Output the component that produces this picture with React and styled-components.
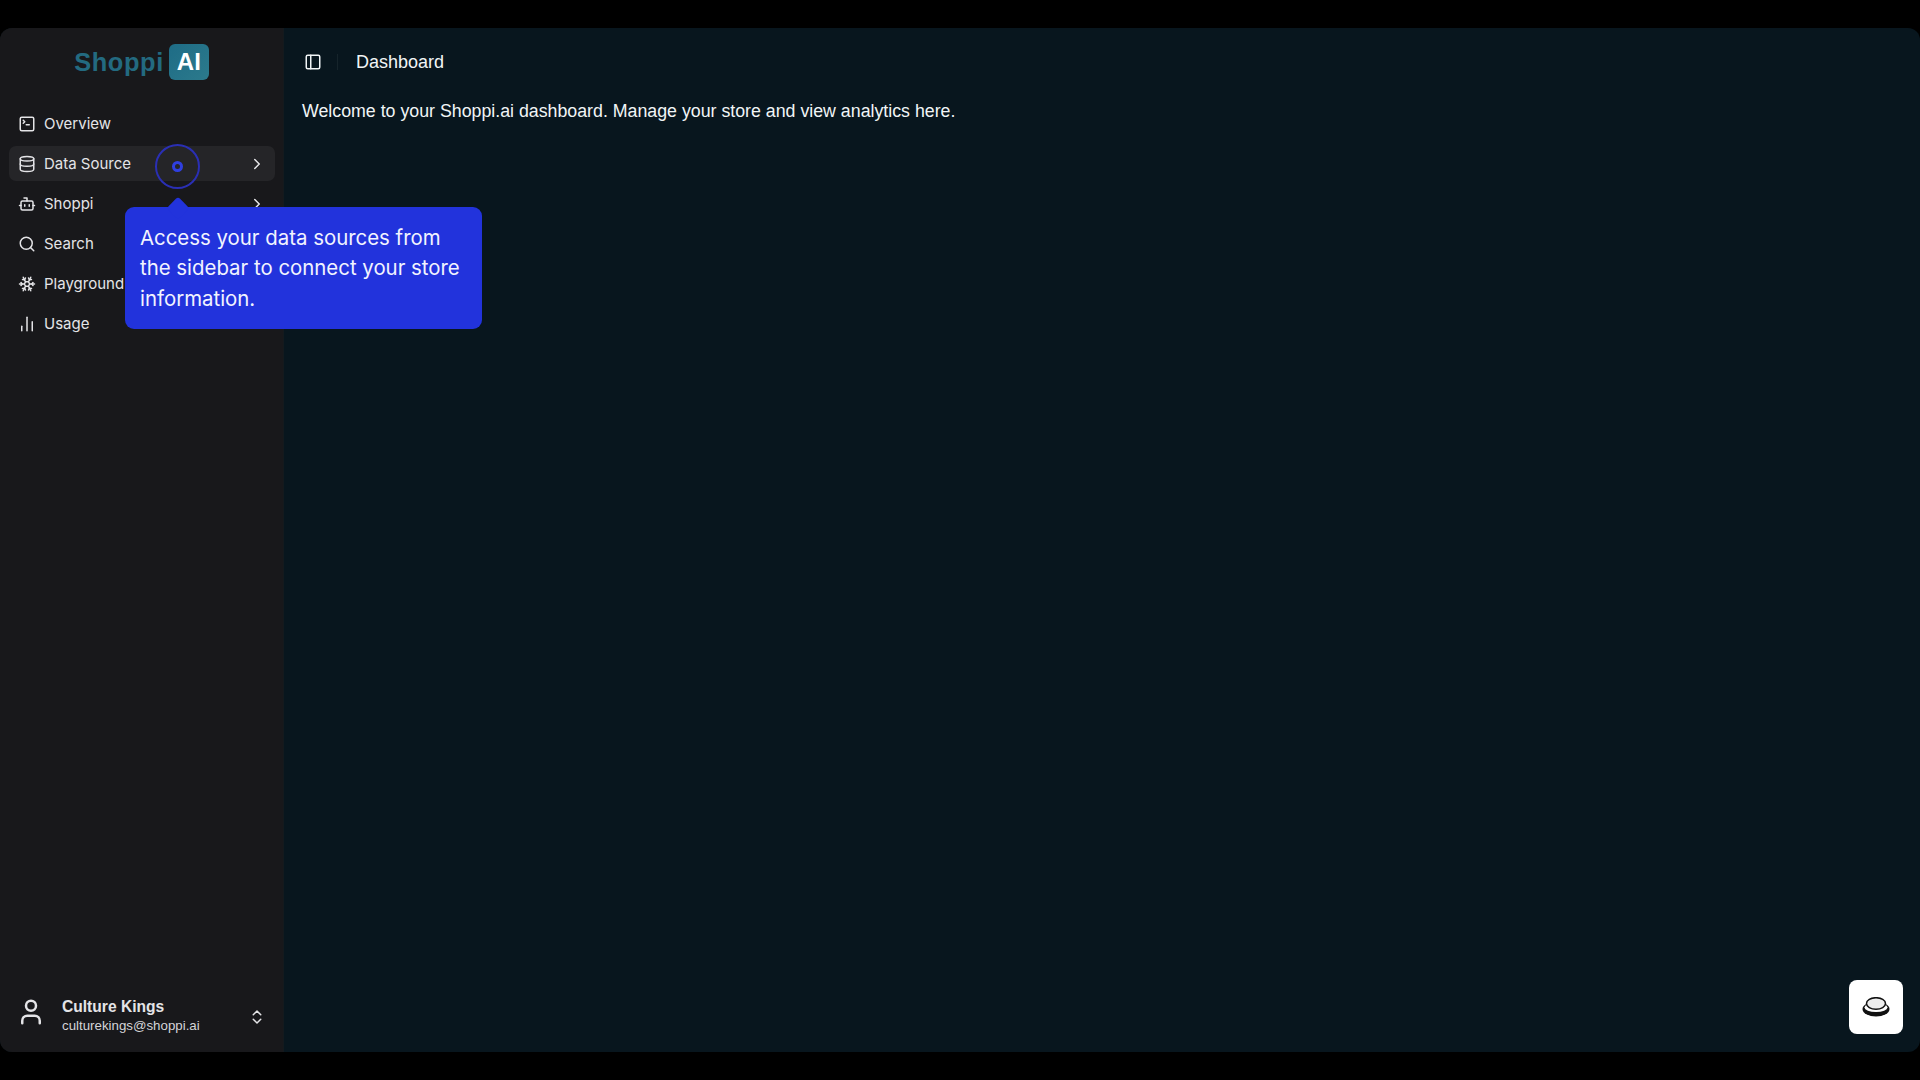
import React from "react";
import styled, { createGlobalStyle } from "styled-components";
import {
  SquareTerminal, Database, Bot, Search, Snowflake, ChartNoAxesColumn,
  ChevronRight, ChevronsUpDown, PanelLeft, User,
} from "lucide-react";

const Global = createGlobalStyle`
  html, body { margin: 0; padding: 0; background: #000; height: 100%; overflow: hidden; }
  * { box-sizing: border-box; }
`;

const Screen = styled.div`
  width: 1920px;
  height: 1080px;
  padding: 28px 0;
  background: #000;
  position: relative;
`;
const Frame = styled.div`
  display: flex;
  height: 1024px;
  border-radius: 12px;
  overflow: hidden;
  background: #08161e;
  position: relative;
`;
const Sidebar = styled.aside`
  width: 284px;
  flex: none;
  background: #18181b;
  display: flex;
  flex-direction: column;
  padding: 16px 8px 14px 9px;
  font-family: Inter, sans-serif;
  border-right: 1px solid #141a1e;
`;
const Logo = styled.div`
  display: flex;
  justify-content: center;
  align-items: center;
  gap: 5px;
  height: 36px;
  margin-bottom: 26px;
  padding-right: 1px;
  font: 700 25.4px "Liberation Sans", Arial, sans-serif;
`;
const LogoText = styled.span`
  color: #236a80;
  letter-spacing: 0.6px;
`;
const LogoBadge = styled.span`
  background: linear-gradient(135deg, #1e6c86, #2c7a8c);
  color: #fff;
  border-radius: 6px;
  width: 40px;
  height: 36px;
  display: flex;
  align-items: center;
  justify-content: center;
  font-size: 24px;
`;
const Nav = styled.nav`
  display: flex;
  flex-direction: column;
  gap: 5px;
`;
const Row = styled.div`
  display: flex;
  align-items: center;
  height: 35px;
  padding: 0 9px;
  border-radius: 7px;
  gap: 8px;
  color: #e4e4e7;
  font-size: 15px;
  background: ${(p) => (p.$active ? "#252528" : "transparent")};
  svg { flex: none; }
`;
const Label = styled.span`
  flex: 1;
  white-space: nowrap;
`;
const Spacer = styled.div`
  flex: 1;
`;
const Account = styled.div`
  display: flex;
  align-items: center;
  height: 44px;
  padding: 0 9px 0 7px;
  margin-bottom: 1px;
  color: #e4e4e7;
  font-family: "Liberation Sans", Arial, sans-serif;
`;
const AccountIcon = styled.span`
  display: flex;
  margin-top: -6px;
`;
const AccountChevron = styled.span`
  display: flex;
  margin-top: 3px;
`;
const AccountText = styled.div`
  flex: 1;
  margin-left: 16px;
  display: flex;
  flex-direction: column;
  padding-top: 1px;
`;
const AccountName = styled.span`
  font-size: 15.6px;
  font-weight: 700;
  line-height: 20px;
`;
const AccountMail = styled.span`
  font-size: 13.3px;
  line-height: 17px;
  color: #d4d4d8;
`;
const Main = styled.main`
  flex: 1;
  font-family: "Liberation Sans", Arial, sans-serif;
  color: #f1f5f6;
`;
const Header = styled.header`
  display: flex;
  align-items: center;
  height: 68px;
  padding-left: 20px;
`;
const Divider = styled.span`
  width: 1px;
  height: 16px;
  background: #16242b;
  margin: 0 18px 0 15px;
`;
const Title = styled.span`
  font-size: 18px;
`;
const Welcome = styled.p`
  margin: 0;
  padding-left: 18px;
  font-size: 17.77px;
  line-height: 30px;
`;
const Beacon = styled.div`
  position: absolute;
  left: 155px;
  top: 116px;
  width: 45px;
  height: 45px;
  border: 2px solid #2a2fb4;
  border-radius: 50%;
  display: flex;
  align-items: center;
  justify-content: center;
`;
const BeaconDot = styled.span`
  width: 11px;
  height: 11px;
  border: 3px solid #2f3fe0;
  border-radius: 50%;
`;
const Tooltip = styled.div`
  position: absolute;
  left: 125px;
  top: 179px;
  width: 357px;
  height: 122px;
  padding: 16px 15px;
  border-radius: 9px;
  background: #2233dc;
  color: #f2f4ff;
  font: 400 20.4px/30.4px Inter, sans-serif;
  &::before {
    content: "";
    position: absolute;
    left: 45px;
    top: -7px;
    width: 16px;
    height: 16px;
    background: #2233dc;
    transform: rotate(45deg);
    border-radius: 3px;
  }
`;
const HelpButton = styled.div`
  position: absolute;
  right: 17px;
  bottom: 18px;
  width: 54px;
  height: 54px;
  border-radius: 8px;
  background: #fff;
  display: flex;
  align-items: center;
  justify-content: center;
`;

const items = [
  { label: "Overview", Icon: SquareTerminal },
  { label: "Data Source", Icon: Database, chevron: true, active: true },
  { label: "Shoppi", Icon: Bot, chevron: true },
  { label: "Search", Icon: Search },
  { label: "Playground", Icon: Snowflake },
  { label: "Usage", Icon: ChartNoAxesColumn },
];

export default function App() {
  return (
    <Screen>
      <Global />
      <Frame>
        <Sidebar>
          <Logo>
            <LogoText>Shoppi</LogoText>
            <LogoBadge>AI</LogoBadge>
          </Logo>
          <Nav>
            {items.map(({ label, Icon, chevron, active }) => (
              <Row key={label} $active={active}>
                <Icon size={18} strokeWidth={2} />
                <Label>{label}</Label>
                {chevron && <ChevronRight size={18} />}
              </Row>
            ))}
          </Nav>
          <Spacer />
          <Account>
            <AccountIcon><User size={30} strokeWidth={2} /></AccountIcon>
            <AccountText>
              <AccountName>Culture Kings</AccountName>
              <AccountMail>culturekings@shoppi.ai</AccountMail>
            </AccountText>
            <AccountChevron><ChevronsUpDown size={18} /></AccountChevron>
          </Account>
        </Sidebar>
        <Main>
          <Header>
            <PanelLeft size={18} />
            <Divider />
            <Title>Dashboard</Title>
          </Header>
          <Welcome>Welcome to your Shoppi.ai dashboard. Manage your store and view analytics here.</Welcome>
        </Main>
        <Beacon><BeaconDot /></Beacon>
        <Tooltip>Access your data sources from the sidebar to connect your store information.</Tooltip>
        <HelpButton>
          <svg width="28" height="20" viewBox="0 0 28 20">
            <ellipse cx="14" cy="12" rx="13.5" ry="7.5" fill="#111" />
            <ellipse cx="14" cy="10.5" rx="11.5" ry="4.6" fill="#fff" />
            <ellipse cx="14" cy="6.5" rx="9.5" ry="5.8" fill="#eee" stroke="#111" strokeWidth="1.5" />
          </svg>
        </HelpButton>
      </Frame>
    </Screen>
  );
}
